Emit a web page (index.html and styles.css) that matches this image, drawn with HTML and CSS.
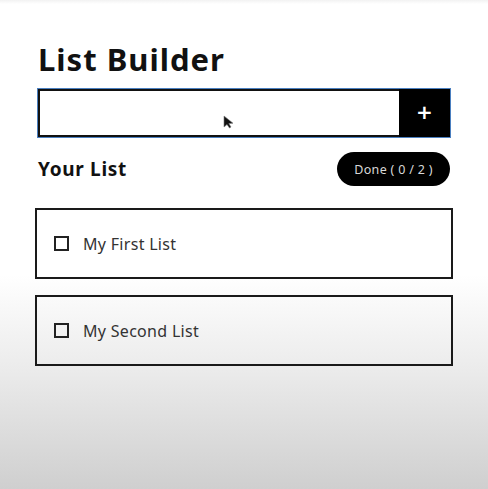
FILE: index.html
```html
<!DOCTYPE html>
<html>
<head>
<meta charset="utf-8">
<link rel="stylesheet" href="styles.css">
</head>
<body>
<main class="app">
  <h1 class="title">List Builder</h1>
  <form class="add-form">
    <div class="input-wrap">
      <input class="add-input" type="text">
      <svg class="cursor" width="12" height="14" viewBox="0 0 12 14"><path d="M1 1 L1 12 L4 9.5 L6.5 13 L8 12 L5.8 8.6 L10 8.2 Z" fill="#111" stroke="#777" stroke-width="0.6"/></svg>
    </div>
    <button class="add-btn" type="button">+</button>
  </form>
  <div class="list-head">
    <h2 class="subtitle">Your List</h2>
    <span class="done-pill">Done ( 0 / 2 )</span>
  </div>
  <ul class="items">
    <li class="item"><span class="check"></span><span class="label">My First List</span></li>
    <li class="item"><span class="check"></span><span class="label">My Second List</span></li>
  </ul>
</main>
</body>
</html>
```
FILE: styles.css
```css
html, body {
  margin: 0;
  height: 100%;
}
body {
  background: linear-gradient(to bottom, #f2f2f2 0px, #ffffff 4px, #ffffff 275px, #ebebeb 370px, #cfcfcf 489px);
  font-family: "Noto Sans", "Open Sans", sans-serif;
  color: #111;
}
.app {
  padding: 40px 36px 0 35px;
}
.title {
  margin: 0 0 0 3px;
  font-size: 31px;
  font-weight: 700;
  line-height: 38px;
  letter-spacing: 1px;
}
.add-form {
  margin: 10px 0 0 2px;
  display: flex;
  height: 50px;
  border: 1px solid #4a7fc0;
  box-sizing: border-box;
  width: 414px;
}
.input-wrap {
  position: relative;
  flex: 1;
  display: flex;
}
.add-input {
  flex: 1;
  border: 2px solid #111;
  border-right: none;
  margin: 0;
  padding: 0 10px;
  font: inherit;
  outline: none;
  background: #fff;
}
.cursor {
  position: absolute;
  left: 185px;
  top: 26px;
}
.add-btn {
  width: 51px;
  border: none;
  background: #000;
  color: #fff;
  font-family: "DejaVu Sans", sans-serif;
  font-size: 20px;
  font-weight: 700;
  padding: 0 0 2px 0;
  margin: 0;
}
.list-head {
  display: flex;
  justify-content: space-between;
  align-items: center;
  margin: 14px 2px 0 3px;
}
.subtitle {
  margin: 0;
  font-size: 19px;
  font-weight: 700;
  letter-spacing: 0.7px;
}
.done-pill {
  background: #000;
  color: #d8d8d8;
  font-size: 12.5px;
  border-radius: 18px;
  height: 34px;
  width: 113px;
  display: flex;
  align-items: center;
  justify-content: center;
  letter-spacing: 0.3px;
}
.items {
  list-style: none;
  margin: 22px 0 0 0;
  padding: 0;
  display: flex;
  flex-direction: column;
  gap: 16px;
}
.item {
  height: 71px;
  box-sizing: border-box;
  border: 2px solid #1a1a1a;
  display: flex;
  align-items: center;
  padding-left: 17px;
  width: 418px;
}
.check {
  width: 15px;
  height: 15px;
  box-sizing: border-box;
  border: 2px solid #222;
  margin-right: 14px;
}
.label {
  font-size: 16px;
  color: #333;
  letter-spacing: 0.3px;
}
```
